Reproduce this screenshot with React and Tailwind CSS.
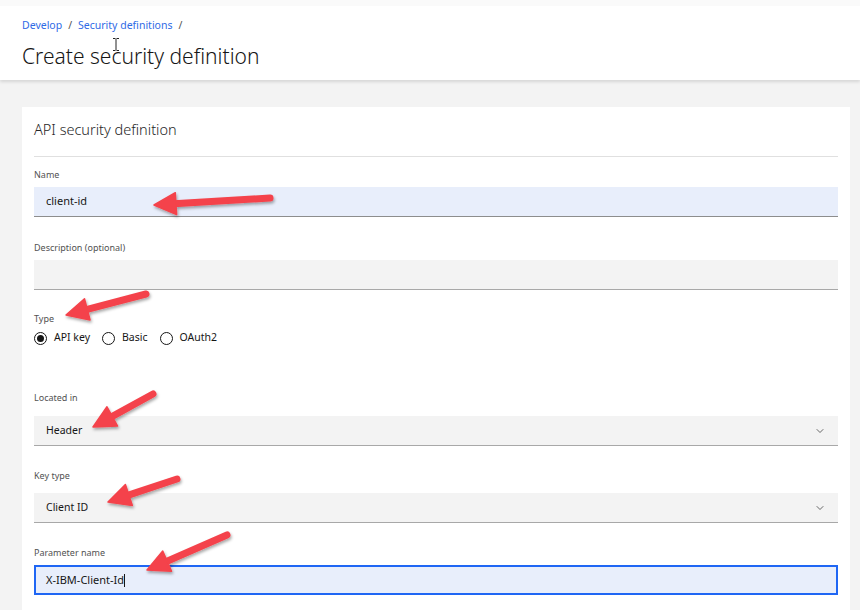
import { ChevronDown } from "lucide-react";

const arrows = [
  { from: [270, 198], to: [154, 205] },
  { from: [146, 294], to: [66, 315] },
  { from: [153, 394], to: [93, 427] },
  { from: [177, 479], to: [108, 502] },
  { from: [227, 535], to: [147, 570] },
];

const Arrow = ({ from, to }) => {
  const [x1, y1] = from;
  const [x2, y2] = to;
  const dx = x2 - x1;
  const dy = y2 - y1;
  const len = Math.hypot(dx, dy);
  const ux = dx / len;
  const uy = dy / len;
  const head = 22;
  const half = 11;
  const bx = x2 - ux * head;
  const by = y2 - uy * head;
  const pts = [
    [x2, y2],
    [bx - uy * half, by + ux * half],
    [bx + uy * half, by - ux * half],
  ]
    .map((p) => p.join(","))
    .join(" ");
  return (
    <g filter="url(#shadow)">
      <line x1={x1} y1={y1} x2={bx + ux * 2} y2={by + uy * 2} stroke="#f4434b" strokeWidth="7" strokeLinecap="round" />
      <polygon points={pts} fill="#f4434b" stroke="#f4434b" strokeWidth="1.5" strokeLinejoin="round" />
    </g>
  );
};

const Label = ({ children, gap = "mb-[6px]" }) => (
  <div className={`text-[9px] leading-[12px] text-[#525252] ${gap}`}>{children}</div>
);

const TextInput = ({ value, tone = "gray", focused = false, caret = false }) => {
  let box = "bg-[#f3f3f3] border-b border-[#a8a8a8] px-[12px]";
  if (tone === "blue") box = "bg-[#e8eefb] border-b border-[#8d8d8d] px-[12px]";
  if (focused) box = "bg-[#e8eefb] border-2 border-[#1f66f4] px-[10px]";
  return (
    <div className={`h-[30px] flex items-center text-[11px] text-[#161616] ${box}`}>
      {value}
      {caret && <span className="inline-block w-px h-[13px] bg-[#161616]" />}
    </div>
  );
};

const Select = ({ value }) => (
  <div className="h-[30px] flex items-center justify-between px-[12px] bg-[#f3f3f3] border-b border-[#a8a8a8] text-[10.5px] text-[#161616]">
    <span>{value}</span>
    <ChevronDown size={12} strokeWidth={1.5} className="text-[#393939]" />
  </div>
);

const Radio = ({ label, checked }) => (
  <label className="flex items-center gap-[7px] mr-[12px]">
    <span className="w-[13px] h-[13px] rounded-full border border-[#161616] flex items-center justify-center">
      {checked && <span className="w-[7px] h-[7px] rounded-full bg-[#161616]" />}
    </span>
    <span className="text-[10.5px] text-[#161616]">{label}</span>
  </label>
);

export default function App() {
  return (
    <div
      className="relative w-[860px] h-[610px] overflow-hidden bg-[#f3f3f3]"
      style={{ fontFamily: "'Noto Sans', 'Liberation Sans', sans-serif" }}
    >
      {/* Page header */}
      <div className="bg-[#fafafa] pt-[6px] shadow-[0_2px_3px_rgba(0,0,0,0.12)] relative z-10">
        <div className="bg-white h-[74px] px-[22px] pt-[12px]">
          <div className="flex items-center gap-[6px] text-[10.5px] leading-[14px]">
            <span className="text-[#2f6ae6]">Develop</span>
            <span className="text-[#525252]">/</span>
            <span className="text-[#2f6ae6]">Security definitions</span>
            <span className="text-[#525252]">/</span>
          </div>
          <h1 className="mt-[10px] text-[21px] leading-[28px] font-light text-[#161616]">
            Create security definition
          </h1>
        </div>
      </div>

      {/* I-beam mouse cursor */}
      <svg className="absolute left-[112px] top-[38px] z-20" width="8" height="13" viewBox="0 0 8 13">
        <path d="M1 0.5h2.5M4.5 0.5H7M4 1v11M1 12.5h2.5M4.5 12.5H7" stroke="#222" strokeWidth="1" fill="none" />
      </svg>

      {/* Body */}
      <div className="pt-[27px] pl-[22px] pr-[10px]">
        <div className="bg-white px-[12px] pt-[12px] pb-[20px]">
          <h2 className="text-[14.5px] leading-[20px] font-light text-[#262626]">API security definition</h2>
          <div className="mt-[17px] border-t border-[#e0e0e0]" />

          <div className="mt-[12px]">
            <Label>Name</Label>
            <TextInput value="client-id" tone="blue" />
          </div>

          <div className="mt-[25px]">
            <Label>Description (optional)</Label>
            <TextInput value="" />
          </div>

          <div className="mt-[23px]">
            <Label>Type</Label>
            <div className="flex items-center h-[14px] mt-[1px]">
              <Radio label="API key" checked />
              <Radio label="Basic" />
              <Radio label="OAuth2" />
            </div>
          </div>

          <div className="mt-[47px]">
            <Label gap="mb-[12px]">Located in</Label>
            <Select value="Header" />
          </div>

          <div className="mt-[24px]">
            <Label gap="mb-[11px]">Key type</Label>
            <Select value="Client ID" />
          </div>

          <div className="mt-[24px]">
            <Label>Parameter name</Label>
            <TextInput value="X-IBM-Client-Id" focused caret />
          </div>
        </div>
      </div>

      {/* Annotation arrows */}
      <svg className="absolute inset-0 z-30 pointer-events-none" width="860" height="610">
        <defs>
          <filter id="shadow" x="-20%" y="-40%" width="140%" height="180%">
            <feDropShadow dx="1" dy="2" stdDeviation="1.5" floodColor="#000" floodOpacity="0.35" />
          </filter>
        </defs>
        {arrows.map((a, i) => (
          <Arrow key={i} {...a} />
        ))}
      </svg>
    </div>
  );
}
